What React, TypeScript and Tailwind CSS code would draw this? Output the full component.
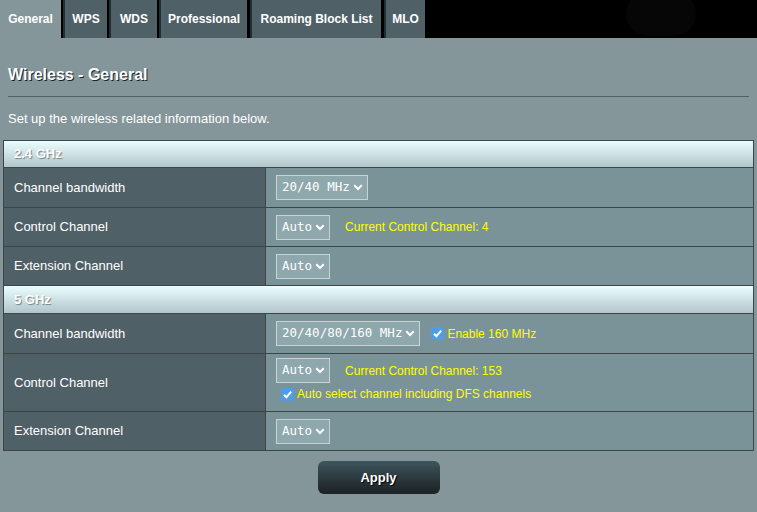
import React from 'react';

const tabs = [
  { name: 'General', w: 'w-[61px]', gap: '' },
  { name: 'WPS', w: 'w-[44px]', gap: 'ml-[2px]' },
  { name: 'WDS', w: 'w-[48px]', gap: 'ml-[2px]' },
  { name: 'Professional', w: 'w-[88px]', gap: 'ml-[2px]' },
  { name: 'Roaming Block List', w: 'w-[131px]', gap: 'ml-[3px]' },
  { name: 'MLO', w: 'w-[41px]', gap: 'ml-[3px]' },
];

function Chevron() {
  return (
    <svg width="10" height="7" viewBox="0 0 10 7" className="ml-[3px] shrink-0">
      <path d="M1.3 1.3 L5 5 L8.7 1.3" fill="none" stroke="#ffffff" strokeWidth="2" />
    </svg>
  );
}

function Select({ value }: { value: string }) {
  return (
    <div className="inline-flex h-[25px] items-center border border-[#c9d3d5] bg-[#8ea8ad] pl-[5px] pr-[4px] font-['DejaVu_Sans_Mono',monospace] text-[12.5px] text-white">
      <span className="leading-none">{value}</span>
      <Chevron />
    </div>
  );
}

function Checkbox() {
  return (
    <span className="inline-flex h-[13px] w-[13px] shrink-0 items-center justify-center rounded-[2px] bg-[#4f9de6]">
      <svg width="11" height="11" viewBox="0 0 11 11">
        <path d="M2 5.8 L4.4 8.2 L9.2 2.6" fill="none" stroke="#ffffff" strokeWidth="2" />
      </svg>
    </span>
  );
}

function Section({ title, h }: { title: string; h: string }) {
  return (
    <div className={`flex ${h} items-center border-b border-[#3f4446] bg-gradient-to-b from-[#ebfeff] to-[#b2c5ca] pl-[10px] text-[13px] font-bold text-white [text-shadow:1px_1px_1px_#6f8489]`}>
      {title}
    </div>
  );
}

function Row({ label, h, children }: { label: string; h: string; children: React.ReactNode }) {
  return (
    <div className={`flex border-b border-[#3f4446] last:border-b-0 ${h}`}>
      <div className="flex w-[262px] shrink-0 items-center border-r border-[#3f4446] bg-[#4f6067] pl-[10px] text-[13px] text-white">
        {label}
      </div>
      <div className="flex flex-1 items-center bg-[#7a9399] pl-[10px]">{children}</div>
    </div>
  );
}

export default function App() {
  return (
    <div className="h-[512px] w-[757px] overflow-hidden bg-[#84969a] font-['Liberation_Sans',Arial,sans-serif] text-white">
      {/* Tabs */}
      <div className="relative flex h-[38px] bg-black">
        {tabs.map((t, i) => (
          <div
            key={t.name}
            className={`flex items-center justify-center text-[12px] font-bold ${t.w} ${t.gap} ${
              i === 0 ? 'bg-[#84969a]' : 'bg-[#4f6067] border-l-2 border-[#1e3036]'
            }`}
          >
            {t.name}
          </div>
        ))}
        <div className="absolute left-[626px] top-[-8px] h-[44px] w-[70px] rounded-full bg-[#060606]" />
      </div>

      <div className="px-[8px]">
        <div className="pt-[26px] text-[16px] font-bold leading-[22px] [text-shadow:1px_1px_0_#1b2225]">
          Wireless - General
        </div>
        <div className="mt-[10px] h-[1px] w-[741px] bg-[#535f63]" />
        <div className="mt-[14px] text-[13px] leading-[16px]">Set up the wireless related information below.</div>
      </div>

      {/* Table */}
      <div className="ml-[3px] mt-[13px] w-[751px] border border-[#3f4446]">
        <Section title="2.4 GHz" h="h-[27px]" />
        <Row label="Channel bandwidth" h="h-[40px]">
          <Select value="20/40 MHz" />
        </Row>
        <Row label="Control Channel" h="h-[39px]">
          <Select value="Auto" />
          <span className="ml-[15px] text-[12px] text-[#ffff00]">Current Control Channel: 4</span>
        </Row>
        <div className="border-b border-[#3f4446]">
          <Row label="Extension Channel" h="h-[38px]">
            <Select value="Auto" />
          </Row>
        </div>
        <Section title="5 GHz" h="h-[28px]" />
        <Row label="Channel bandwidth" h="h-[40px]">
          <Select value="20/40/80/160 MHz" />
          <span className="ml-[11px] flex items-center gap-[3px] text-[12px] text-[#ffff00]">
            <Checkbox />
            Enable 160 MHz
          </span>
        </Row>
        <Row label="Control Channel" h="h-[58px]">
          <div className="flex flex-col self-start pt-[4px]">
            <div className="flex items-center">
              <Select value="Auto" />
              <span className="ml-[15px] text-[12px] text-[#ffff00]">Current Control Channel: 153</span>
            </div>
            <div className="mt-[4px] flex items-center gap-[3px] pl-[5px] text-[12px] leading-[14px] text-[#ffff00]">
              <Checkbox />
              Auto select channel including DFS channels
            </div>
          </div>
        </Row>
        <Row label="Extension Channel" h="h-[38px]">
          <Select value="Auto" />
        </Row>
      </div>

      <div className="mt-[10px] flex justify-center">
        <button className="h-[33px] w-[122px] rounded-[6px] bg-gradient-to-b from-[#3e555d] to-[#1c2124] text-[13px] font-bold text-white [text-shadow:1px_1px_0_#000]">
          Apply
        </button>
      </div>
    </div>
  );
}
